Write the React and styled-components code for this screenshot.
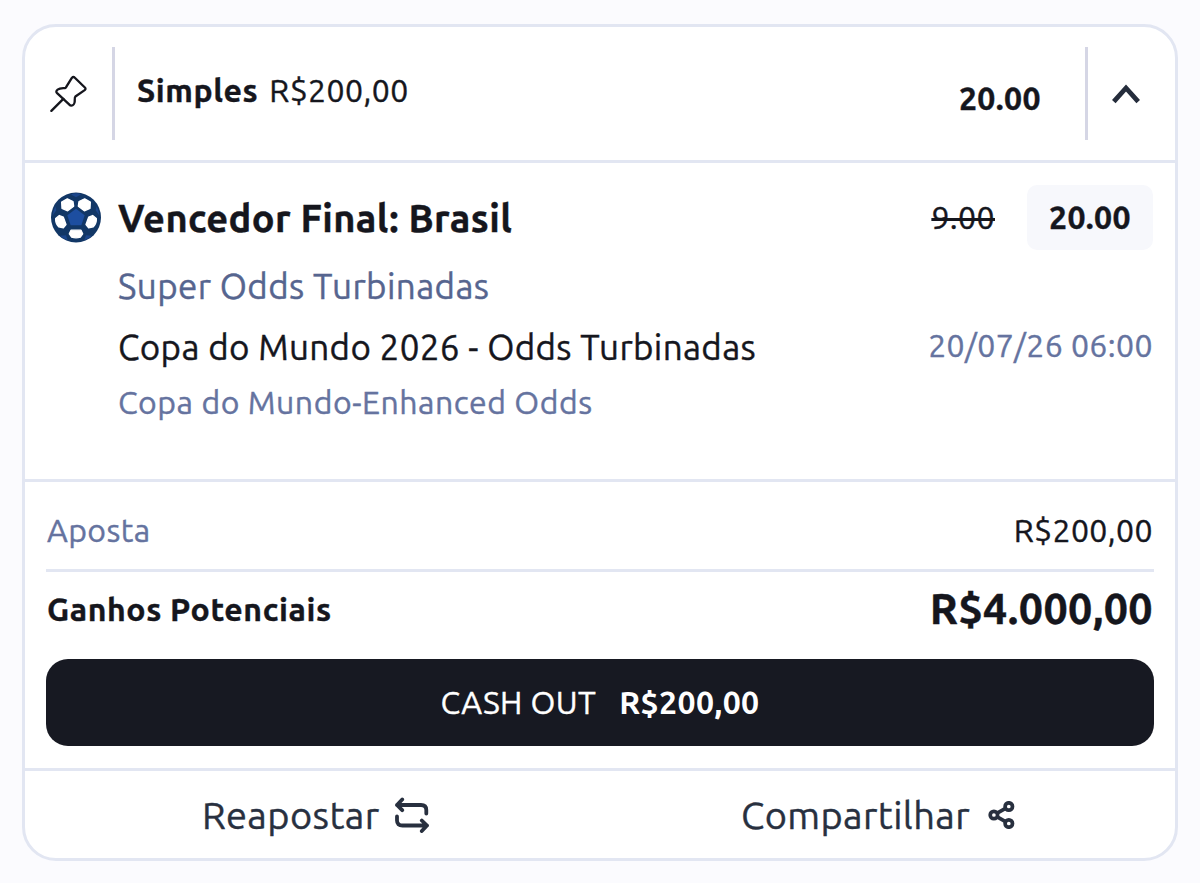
import React, { useState } from 'react'
import styled, { createGlobalStyle } from 'styled-components'

const BetCard = () => {
  const [ open , setOpen ] = useState(true);

  return (
    <Card>
      <Header>
        <PinButton>
          <PinIcon />
        </PinButton>
        <HeaderMain>
          <BetType>
            <Text $bold $spacing={0.6}>Simples</Text>
            <Text>R$200,00</Text>
          </BetType>
          <TotalOdds>20.00</TotalOdds>
        </HeaderMain>
        <ToggleButton onClick={() => setOpen(!open)}>
          <ChevronIcon />
        </ToggleButton>
      </Header>
      {
        open && (
          <Selection>
            <BallIcon />
            <Details>
              <Line $height={65}>
                <Text $bold $size={38}>Vencedor Final: Brasil</Text>
                <Odds>
                  <OldOdds>9.00</OldOdds>
                  <NewOdds>20.00</NewOdds>
                </Odds>
              </Line>
              <Line $height={73}>
                <Text $size={35} $color="#56658f">Super Odds Turbinadas</Text>
              </Line>
              <Line $height={48}>
                <Text $size={35} $spacing={0.35}>Copa do Mundo 2026 - Odds Turbinadas</Text>
                <EventDate>20/07/26 06:00</EventDate>
              </Line>
              <Line $height={62}>
                <Text $color="#65739f" $spacing={0.52}>Copa do Mundo-Enhanced Odds</Text>
              </Line>
            </Details>
          </Selection>
        )
      }
      <Summary>
        <StakeRow>
          <Text $color="#65739f">Aposta</Text>
          <Text>R$200,00</Text>
        </StakeRow>
        <ReturnRow>
          <Text $bold $spacing={0.6}>Ganhos Potenciais</Text>
          <ReturnValue>R$4.000,00</ReturnValue>
        </ReturnRow>
        <CashOut>
          <span>CASH OUT</span>
          <b>R$200,00</b>
        </CashOut>
      </Summary>
      <Footer>
        <Action $gap={15}>
          Reapostar
          <RepeatIcon />
        </Action>
        <Action $gap={18}>
          Compartilhar
          <ShareIcon />
        </Action>
      </Footer>
    </Card>
  )
}

const PinIcon = () => (
  <svg width="37" height="38" viewBox="0 0 38 38" fill="none" stroke="#15161d" strokeWidth="2.4" strokeLinecap="round" strokeLinejoin="round">
    <path d="M1.4 36.3 13.7 24" />
    <path d="M22.6 2.3Q24 .8 25.5 2.3L35.8 12.3Q37.2 13.7 35.6 15L26.1 21.6C25.2 22.3 25.4 24.5 25.4 26.5C25.3 29 23.7 31 22 31C20.6 31 19.8 29.8 18.8 28.8L7.3 18.1C6.1 16.9 6.3 15.5 7.8 14.5C10.2 12.9 12.9 13.2 15.5 12.9C16.2 12.8 16.5 12 17 11.2Z" />
  </svg>
)

const ChevronIcon = () => (
  <svg width="30" height="22" viewBox="0 0 30 22" fill="none" stroke="#252d3c" strokeWidth="4.8">
    <path d="M2.8 18.6 15 5 27.2 18.6" />
  </svg>
)

const BallIcon = () => (
  <Ball viewBox="64 36 150 152">
    <circle cx="139" cy="112" r="75" fill="#123766" />
    <path d="M139 86 165 105 155 135H123L113 105Z" fill="#1d4ea0" />
    <path d="M124 43Q139 36 154 43L139 51ZM77 78Q70 92 69 106L80 90ZM201 78Q208 92 209 106L198 90ZM91 167Q101 177 114 180L109 165ZM187 167Q177 177 164 180L169 165Z" fill="#1b468c" />
    <g fill="#fff" stroke="#fff" strokeWidth="4" strokeLinejoin="round">
      <path d="M96 66 113 56 130 64 132 78 114 92 97 85Z" />
      <path d="M182 66 165 56 148 64 146 78 164 92 181 85Z" />
      <path d="M89 106 101 111 109 133 101 143 87 140Q77 130 78 115Z" />
      <path d="M189 106 177 111 169 133 177 143 191 140Q201 130 200 115Z" />
      <path d="M124 150H154L159 161 152 171Q139 175 126 171L119 161Z" />
    </g>
  </Ball>
)

const RepeatIcon = () => (
  <svg width="36" height="36" viewBox="0 0 36 36" fill="none" stroke="#28303f" strokeWidth="3.8" strokeLinecap="round" strokeLinejoin="round">
    <path d="M8.2 2.5 3 8 8.2 13.2M3 8H27Q32.3 8 32.3 13V16.5" />
    <path d="M27.8 23.5 33 28.5 27.8 34M33 28.5H8.5Q3 28.5 3 23.5V19.5" />
  </svg>
)

const ShareIcon = () => (
  <svg width="28" height="28" viewBox="0 0 28 28" fill="none" stroke="#28303f" strokeWidth="3.7">
    <circle cx="5.9" cy="14" r="3.7" />
    <circle cx="20.8" cy="5.5" r="3.7" />
    <circle cx="20.8" cy="22.5" r="3.7" />
    <path d="M9.2 12.1 17.5 7.4M9.2 15.9 17.5 20.6" />
  </svg>
)

const App = () => (
  <React.Fragment>
    <GlobalStyle />
    <BetCard />
  </React.Fragment>
)

export default App;


const GlobalStyle = createGlobalStyle`
  *{
    box-sizing: border-box;
  }
  body{
    margin: 0;
    padding: 24px 22px 0;
    background: #fbfbfe;
    color: #15161d;
    font-family: Ubuntu, "Noto Sans", sans-serif;
    font-size: 32px;
    line-height: 1;
    letter-spacing: 0.4px;
    -webkit-text-stroke: 0.4px;
  }
  button{
    border: none;
    background: none;
    padding: 0;
    font: inherit;
    letter-spacing: inherit;
    color: inherit;
    cursor: pointer;
  }
  svg{
    display: block;
    flex: none;
  }
`;

const Card = styled.div`
  height: 837px;
  border: 3px solid #e2e6f2;
  border-radius: 34px;
  background: #fff;
  overflow: hidden;
  display: flex;
  flex-direction: column;
`;

const Text = styled.span`
  font-size: ${(props) => props.$size || 32}px;
  font-weight: ${(props) => props.$bold ? 700 : 400};
  color: ${(props) => props.$color || "#15161d"};
  letter-spacing: ${(props) => props.$spacing || 0.4}px;
  white-space: nowrap;
`;

const Header = styled.div`
  display: flex;
  height: 136px;
  padding: 20px 0;
  border-bottom: 3px solid #e2e6f2;
`;

const PinButton = styled.button`
  display: flex;
  align-items: center;
  width: 90px;
  padding-left: 25px;
  border-right: 3px solid #d5d6e5;
`;

const HeaderMain = styled.div`
  flex: 1;
  display: flex;
  justify-content: space-between;
  padding: 0 44px 0 22px;
`;

const BetType = styled.div`
  display: flex;
  gap: 11px;
  padding-top: 27px;
`;

const TotalOdds = styled.span`
  padding-top: 35px;
  font-weight: 700;
`;

const ToggleButton = styled.button`
  display: flex;
  align-items: center;
  width: 90px;
  padding-left: 23px;
  border-left: 3px solid #d5d6e5;
`;

const Selection = styled.div`
  display: flex;
  height: 319px;
  padding: 22px 22px 0 26px;
  border-bottom: 3px solid #e2e6f2;
`;

const Ball = styled.svg`
  width: 50px;
  height: 51px;
  margin: 7px 17px 0 0;
`;

const Details = styled.div`
  flex: 1;
`;

const Line = styled.div`
  display: flex;
  align-items: center;
  justify-content: space-between;
  height: ${(props) => props.$height}px;
`;

const Odds = styled.div`
  display: flex;
  align-items: center;
  gap: 32px;
`;

const OldOdds = styled.span`
  padding-bottom: 1px;
  text-decoration: line-through;
  text-decoration-thickness: 2.5px;
`;

const NewOdds = styled.span`
  display: flex;
  align-items: center;
  justify-content: center;
  width: 126px;
  height: 65px;
  padding-bottom: 1px;
  border-radius: 10px;
  background: #f7f8fc;
  font-weight: 700;
`;

const EventDate = styled.span`
  padding-bottom: 4px;
  color: #65739f;
  white-space: nowrap;
`;

const Summary = styled.div`
  height: 289px;
  padding: 8px 21px 0;
  border-bottom: 3px solid #e2e6f2;
`;

const StakeRow = styled.div`
  display: flex;
  align-items: center;
  justify-content: space-between;
  height: 82px;
  padding: 0 1px;
  border-bottom: 3px solid #e2e6f2;
`;

const ReturnRow = styled.div`
  display: flex;
  align-items: center;
  justify-content: space-between;
  height: 74px;
  padding: 0 1px;
  margin-bottom: 13px;
`;

const ReturnValue = styled.span`
  padding-bottom: 1px;
  font-size: 43px;
  font-weight: 700;
`;

const CashOut = styled.button`
  display: flex;
  align-items: center;
  justify-content: center;
  gap: 23px;
  width: 100%;
  height: 87px;
  padding-bottom: 2px;
  border-radius: 22px;
  background: #171922;
  color: #fff;
  b{
    font-weight: 600;
    -webkit-text-stroke: 0;
  }
`;

const Footer = styled.div`
  flex: 1;
  display: flex;
  justify-content: space-between;
  padding: 0 159px 0 177px;
`;

const Action = styled.button`
  display: flex;
  align-items: center;
  gap: ${(props) => props.$gap}px;
  font-size: 38px;
  color: #28303f;
`;
